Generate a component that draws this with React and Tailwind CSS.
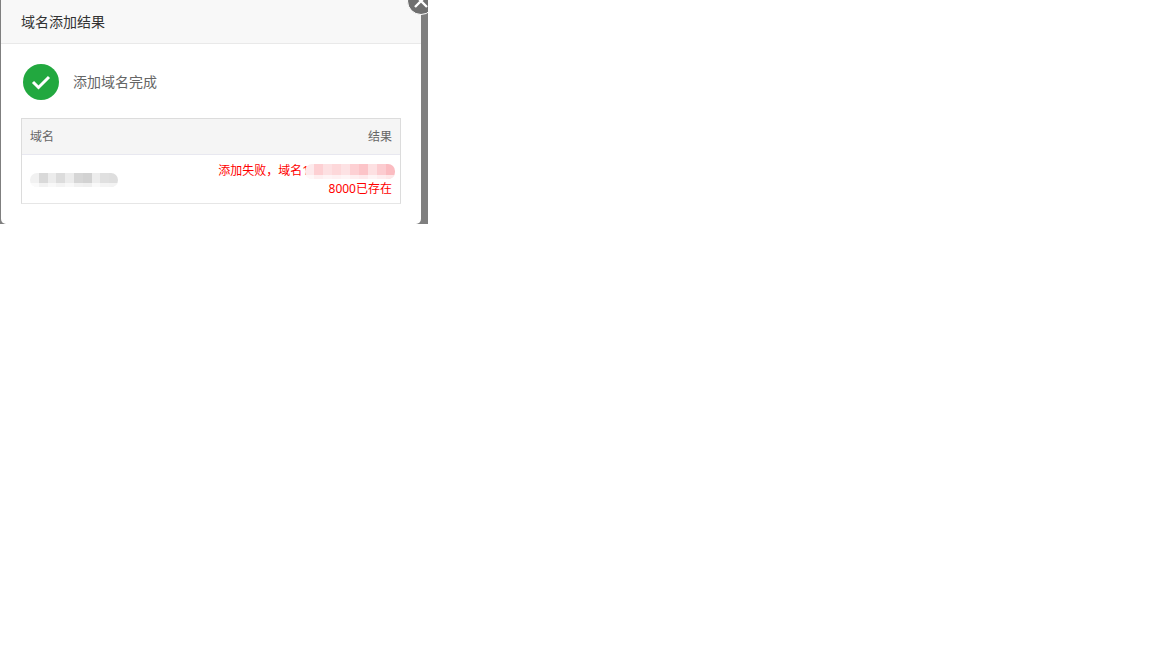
const FONT = "font-['Noto_Sans','Noto_Sans_CJK_SC',sans-serif]"

// pixelated masking over the hidden values
const greyCells = ['#f1f1f1', '#d9d9d9', '#ececec', '#dcdcdc', '#ececec', '#d6d6d6', '#d2d2d2', '#ededed', '#e0e0e0', '#dedede']
const redCells = ['#fdeaec', '#fdd0d3', '#fde0e2', '#fdd8da', '#fde2e4', '#fdd0d3', '#fcc4c8', '#fde0e2', '#fcccd0', '#fbbcc1']

function Mask({ cells, className }) {
  return (
    <span className={`flex overflow-hidden rounded-[7px] ${className}`}>
      {cells.map((c, i) => (
        <span key={i} className="h-full w-[9px]" style={{ backgroundColor: c }} />
      ))}
      <span className="absolute inset-x-0 bottom-0 h-[4px] bg-white/65" />
    </span>
  )
}

export default function App() {
  return (
    <div className={`relative h-[224px] w-[428px] overflow-hidden bg-[#7f7f7f] ${FONT}`}>
      <div className="ml-[1px] h-[224px] w-[420px] overflow-hidden rounded-b-[5px] bg-white">
        <div className="flex h-[44px] items-center border-b border-[#e9e9e9] bg-[#f8f8f8] px-5 text-[14px] text-[#333]">
          域名添加结果
        </div>
        <div className="flex items-center px-[22px] pt-[20px]">
          <span className="flex h-9 w-9 items-center justify-center rounded-full bg-[#22a83f]">
            <svg width="20" height="16" viewBox="0 0 20 16" fill="none">
              <path d="M2 8 L7.5 13.5 L18 3" stroke="white" strokeWidth="3" />
            </svg>
          </span>
          <span className="ml-[14px] mt-[-2px] text-[14px] text-[#666]">添加域名完成</span>
        </div>
        <div className="mx-5 mt-[18px] border border-[#dcdcdc] border-b-[#e6e6e6] text-[12px]">
          <div className="flex h-[36px] items-center justify-between border-b border-[#e8e8f0] bg-[#f5f5f5] px-2 text-[#666]">
            <span>域名</span>
            <span>结果</span>
          </div>
          <div className="flex h-[48px] items-center justify-between px-2">
            <Mask cells={greyCells} className="relative mt-[1px] h-[14px] w-[88px]" />
            <div className="mt-[2px] text-right leading-[18px] text-[#ff0000]">
              <div className="relative pr-[83px]">
                添加失败，域名1
                <Mask cells={redCells} className="absolute right-[-3px] top-[2px] h-[15px] w-[90px]" />
              </div>
              <div>8000已存在</div>
            </div>
          </div>
        </div>
      </div>
      <span className="absolute left-[407px] top-[-13px] flex h-[28px] w-[28px] items-center justify-center rounded-full border border-white bg-[#6f6f6f]">
        <svg width="14" height="14" viewBox="0 0 14 14" fill="none">
          <path d="M1 1 L13 13 M13 1 L1 13" stroke="white" strokeWidth="2.4" />
        </svg>
      </span>
    </div>
  )
}
